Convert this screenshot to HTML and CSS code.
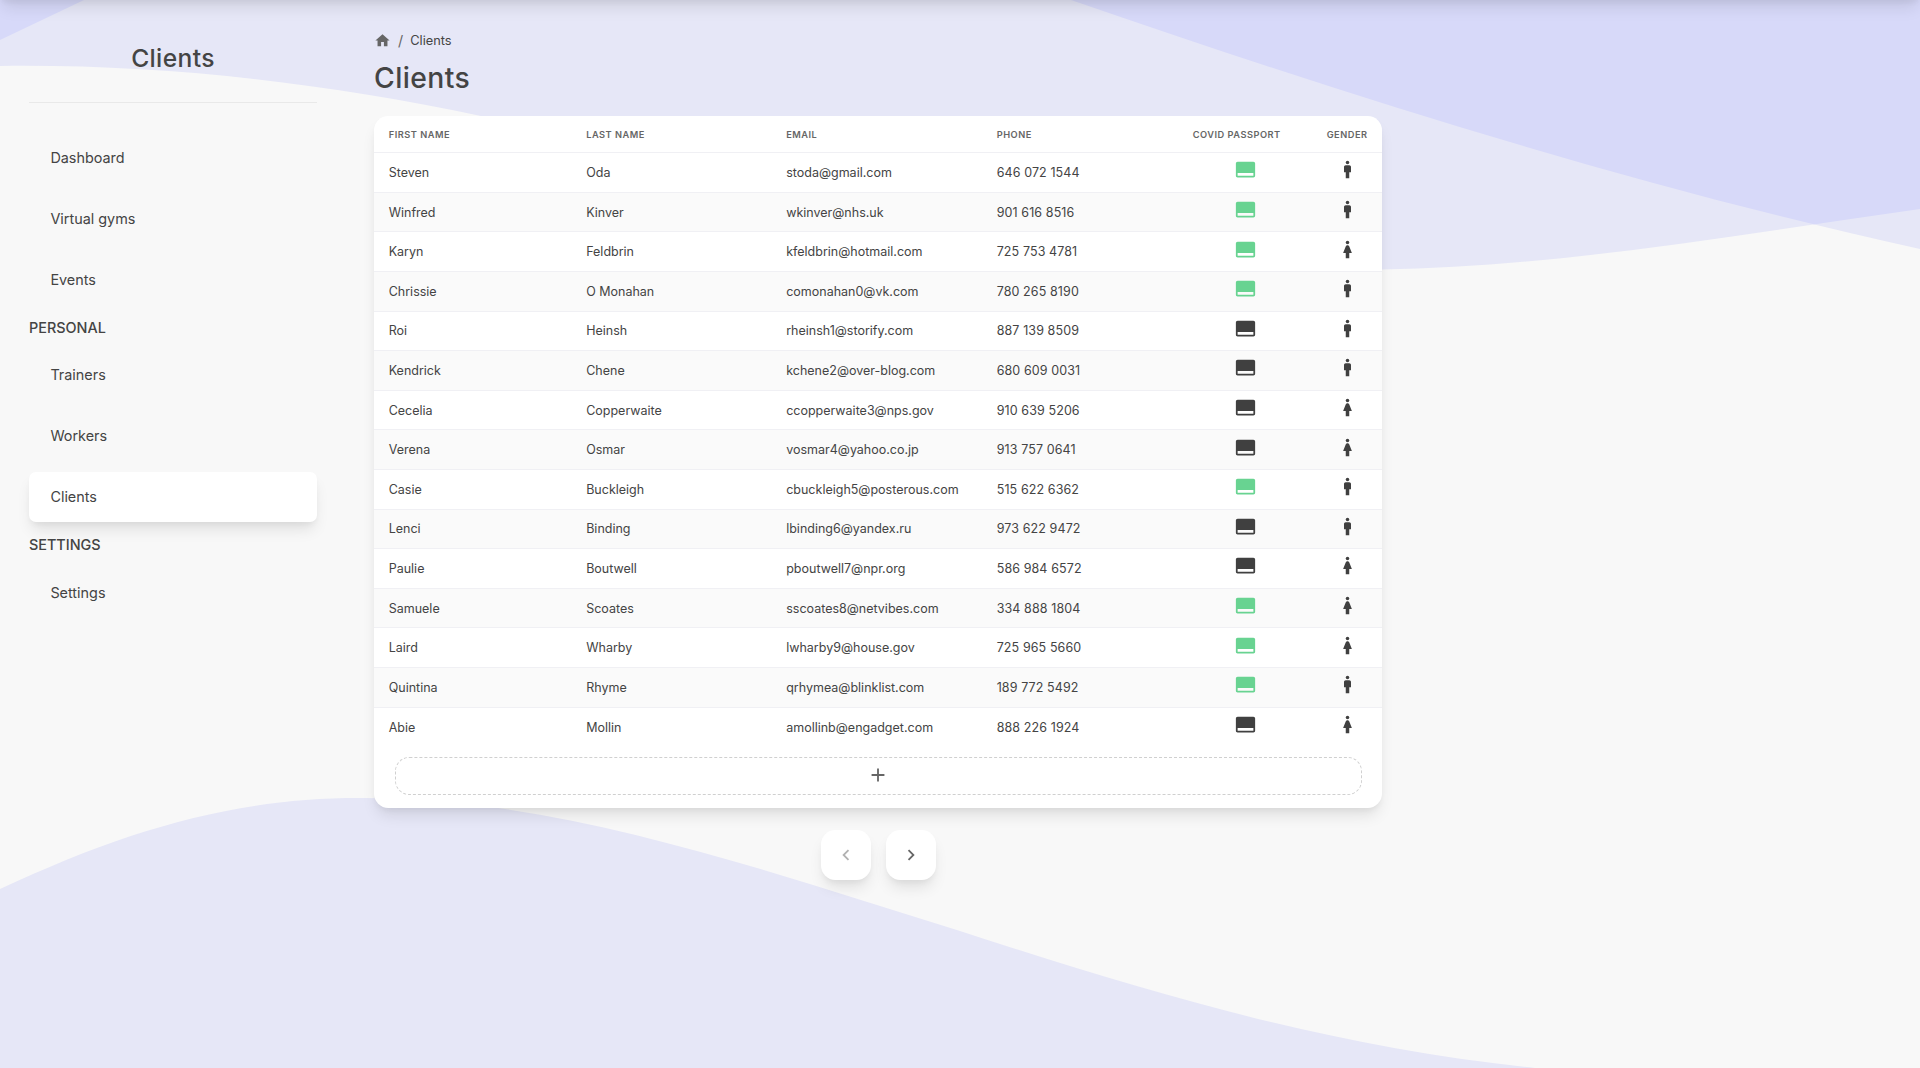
FILE: index.html
```html
<!DOCTYPE html>
<html lang="en">
<head>
<meta charset="utf-8">
<title>Clients</title>
<link rel="stylesheet" href="styles.css">
</head>
<body>
<svg class="waves" viewBox="0 0 1920 1068" preserveAspectRatio="none" aria-hidden="true">
  <path class="light" d="M0,0V66C160,64 320,82 482,116.2C800,185 1150,272 1382,269.5C1560,267 1740,234 1920,209V0Z"/>
  <path class="light" d="M1071,0C1340,93 1630,185 1920,249V0Z"/>
  <path class="light" d="M0,1068V889C130,828 240,797 365,798C560,798 760,869 960,931C1150,993 1330,1047 1535,1068Z"/>
  <clipPath id="front"><path d="M0,0V66C160,64 320,82 482,116.2C800,185 1150,272 1382,269.5C1560,267 1740,234 1920,209V0Z"/></clipPath>
  <path class="deep" clip-path="url(#front)" d="M0,0V40L84,0ZM1071,0C1340,93 1630,185 1920,249V0Z"/>
</svg>
<svg class="sprite" aria-hidden="true">
  <symbol id="home" viewBox="0 0 24 24"><path d="M10 20v-6h4v6h5v-8h3L12 3 2 12h3v8z"/></symbol>
  <symbol id="pass" viewBox="0 0 24 24"><path d="M21 3H3c-1.1 0-2 .9-2 2v14c0 1.1.9 2 2 2h18c1.1 0 2-.9 2-2V5c0-1.1-.9-2-2-2zm0 16H3v-3h18v3z"/></symbol>
  <symbol id="man" viewBox="0 0 24 24"><path d="M14 7h-4c-1.1 0-2 .9-2 2v6h2v7h4v-7h2V9c0-1.1-.9-2-2-2z"/><circle cx="12" cy="4" r="2"/></symbol>
  <symbol id="woman" viewBox="0 0 24 24"><path d="M13.94 8.31C13.62 7.52 12.85 7 12 7s-1.62.52-1.94 1.31L7 16h3v6h4v-6h3l-3.06-7.69z"/><circle cx="12" cy="4" r="2"/></symbol>
  <symbol id="plus" viewBox="0 0 24 24"><path d="M19 13h-6v6h-2v-6H5v-2h6V5h2v6h6v2z"/></symbol>
  <symbol id="prev" viewBox="0 0 24 24"><path d="M15.41 7.41 14 6l-6 6 6 6 1.41-1.41L10.83 12z"/></symbol>
  <symbol id="next" viewBox="0 0 24 24"><path d="M10 6 8.59 7.41 13.17 12l-4.58 4.59L10 18l6-6z"/></symbol>
</svg>
<header class="topbar"></header>
<div class="layout">
  <aside class="sidebar">
    <div class="brand">Clients</div>
    <nav class="nav">
      <div class="group"><a class="item">Dashboard</a><a class="item">Virtual gyms</a><a class="item">Events</a></div>
      <div class="label">PERSONAL</div>
      <div class="group"><a class="item">Trainers</a><a class="item">Workers</a><a class="item active">Clients</a></div>
      <div class="label">SETTINGS</div>
      <div class="group last"><a class="item">Settings</a></div>
    </nav>
  </aside>
  <main class="content">
    <div class="crumbs"><svg class="home"><use href="#home"/></svg><span class="slash">/</span><span>Clients</span></div>
    <h1 class="title">Clients</h1>
    <section class="card">
      <table class="table">
        <colgroup><col class="c1"><col class="c2"><col class="c3"><col class="c4"><col class="c5"><col class="c6"></colgroup>
        <thead><tr><th>FIRST NAME</th><th>LAST NAME</th><th>EMAIL</th><th>PHONE</th><th>COVID PASSPORT</th><th>GENDER</th></tr></thead>
        <tbody>
          <tr><td>Steven</td><td>Oda</td><td>stoda@gmail.com</td><td class="phone">646 072 1544</td><td class="ic ok"><svg><use href="#pass"/></svg></td><td class="ic"><svg><use href="#man"/></svg></td></tr>
          <tr><td>Winfred</td><td>Kinver</td><td>wkinver@nhs.uk</td><td class="phone">901 616 8516</td><td class="ic ok"><svg><use href="#pass"/></svg></td><td class="ic"><svg><use href="#man"/></svg></td></tr>
          <tr><td>Karyn</td><td>Feldbrin</td><td>kfeldbrin@hotmail.com</td><td class="phone">725 753 4781</td><td class="ic ok"><svg><use href="#pass"/></svg></td><td class="ic"><svg><use href="#woman"/></svg></td></tr>
          <tr><td>Chrissie</td><td>O Monahan</td><td>comonahan0@vk.com</td><td class="phone">780 265 8190</td><td class="ic ok"><svg><use href="#pass"/></svg></td><td class="ic"><svg><use href="#man"/></svg></td></tr>
          <tr><td>Roi</td><td>Heinsh</td><td>rheinsh1@storify.com</td><td class="phone">887 139 8509</td><td class="ic"><svg><use href="#pass"/></svg></td><td class="ic"><svg><use href="#man"/></svg></td></tr>
          <tr><td>Kendrick</td><td>Chene</td><td>kchene2@over-blog.com</td><td class="phone">680 609 0031</td><td class="ic"><svg><use href="#pass"/></svg></td><td class="ic"><svg><use href="#man"/></svg></td></tr>
          <tr><td>Cecelia</td><td>Copperwaite</td><td>ccopperwaite3@nps.gov</td><td class="phone">910 639 5206</td><td class="ic"><svg><use href="#pass"/></svg></td><td class="ic"><svg><use href="#woman"/></svg></td></tr>
          <tr><td>Verena</td><td>Osmar</td><td>vosmar4@yahoo.co.jp</td><td class="phone">913 757 0641</td><td class="ic"><svg><use href="#pass"/></svg></td><td class="ic"><svg><use href="#woman"/></svg></td></tr>
          <tr><td>Casie</td><td>Buckleigh</td><td>cbuckleigh5@posterous.com</td><td class="phone">515 622 6362</td><td class="ic ok"><svg><use href="#pass"/></svg></td><td class="ic"><svg><use href="#man"/></svg></td></tr>
          <tr><td>Lenci</td><td>Binding</td><td>lbinding6@yandex.ru</td><td class="phone">973 622 9472</td><td class="ic"><svg><use href="#pass"/></svg></td><td class="ic"><svg><use href="#man"/></svg></td></tr>
          <tr><td>Paulie</td><td>Boutwell</td><td>pboutwell7@npr.org</td><td class="phone">586 984 6572</td><td class="ic"><svg><use href="#pass"/></svg></td><td class="ic"><svg><use href="#woman"/></svg></td></tr>
          <tr><td>Samuele</td><td>Scoates</td><td>sscoates8@netvibes.com</td><td class="phone">334 888 1804</td><td class="ic ok"><svg><use href="#pass"/></svg></td><td class="ic"><svg><use href="#woman"/></svg></td></tr>
          <tr><td>Laird</td><td>Wharby</td><td>lwharby9@house.gov</td><td class="phone">725 965 5660</td><td class="ic ok"><svg><use href="#pass"/></svg></td><td class="ic"><svg><use href="#woman"/></svg></td></tr>
          <tr><td>Quintina</td><td>Rhyme</td><td>qrhymea@blinklist.com</td><td class="phone">189 772 5492</td><td class="ic ok"><svg><use href="#pass"/></svg></td><td class="ic"><svg><use href="#man"/></svg></td></tr>
          <tr><td>Abie</td><td>Mollin</td><td>amollinb@engadget.com</td><td class="phone">888 226 1924</td><td class="ic"><svg><use href="#pass"/></svg></td><td class="ic"><svg><use href="#woman"/></svg></td></tr>
        </tbody>
      </table>
      <button class="add" aria-label="Add client"><svg><use href="#plus"/></svg></button>
    </section>
    <div class="pager">
      <button class="page" disabled aria-label="Previous page"><svg><use href="#prev"/></svg></button>
      <button class="page" aria-label="Next page"><svg><use href="#next"/></svg></button>
    </div>
  </main>
</div>
</body>
</html>
```
FILE: styles.css
```css
:root {
  --text: #444;
  --shadow: 0 10px 15px -3px rgba(0, 0, 0, .1), 0 4px 6px -2px rgba(0, 0, 0, .05);
}
* { box-sizing: border-box; }
body {
  margin: 0;
  height: 1068px;
  overflow: hidden;
  background: #f8f8f8;
  color: var(--text);
  font-family: Inter, sans-serif;
  font-size: 14.4px;
}
svg { display: block; fill: currentColor; }
button { border: 0; padding: 0; background: #fff; color: inherit; }

/* decorative page background */
.waves { position: absolute; inset: 0; width: 1920px; height: 1068px; z-index: -1; }
.light { fill: #e6e7f7; }
.deep { fill: #d7d9f9; }
.sprite { position: absolute; width: 0; height: 0; }
.topbar { position: absolute; top: -60px; left: 0; right: 0; height: 60px; box-shadow: var(--shadow); }

.layout { display: flex; }
.sidebar { width: 346px; padding: 0 29px; flex: none; }
.brand {
  height: 103px;
  padding-top: 43px;
  border-bottom: 1px solid #e9e9e9;
  text-align: center;
  font-size: 24.6px;
  line-height: 30px;
  font-weight: 480;
  letter-spacing: .38px;
}
.nav { padding-top: 30px; }
.group { display: flex; flex-direction: column; gap: 11px; }
.item { height: 50px; padding: 0 21.4px 2px; display: flex; align-items: center; border-radius: 7px; }
.last .item { padding-bottom: 0; }
.active { background: #fff; box-shadow: var(--shadow); }
.label { height: 45px; line-height: 45px; font-weight: 480; }

.content { width: 1036px; padding: 30px 0 0 28px; }
.crumbs { height: 21px; display: flex; align-items: center; font-size: 12.8px; }
.home { width: 17px; height: 17px; margin-right: -1px; color: #666; }
.slash { margin: 0 7px 0 8px; font-size: 14.4px; color: #666; }
.title { margin: 0; height: 65px; padding-top: 9px; font-size: 28.3px; line-height: 36px; font-weight: 480; letter-spacing: .42px; }

.card { height: 692px; background: #fff; border-radius: 14.4px; box-shadow: var(--shadow); }
.table { width: 1008px; table-layout: fixed; border-collapse: separate; border-spacing: 0; }
.c1 { width: 197.5px; }
.c2 { width: 200px; }
.c3 { width: 210.5px; }
.c4 { width: 196px; }
.c5 { width: 134px; }
.c6 { width: 70px; }
th {
  height: 37.2px;
  padding: 0 0 0 14.7px;
  border-bottom: 1px solid #f0f0f4;
  text-align: left;
  white-space: nowrap;
  font-size: 9.25px;
  font-weight: 600;
  letter-spacing: .5px;
  color: #666;
}
td { height: 39.6px; padding: 0 0 0 14.7px; border-bottom: 1px solid #f0f0f4; font-size: 12.5px; }
.phone { letter-spacing: .1px; }
tbody tr:nth-child(even) { background: #fafafa; }
tbody tr:last-child td { border-bottom: 0; }
.ic { padding: 0 0 5px; color: #404040; }
.ic svg { width: 21px; height: 21px; margin: 0 auto; }
.ok { color: #68d391; }
.add {
  display: flex;
  align-items: center;
  justify-content: center;
  width: 967px;
  height: 38px;
  margin: 9.8px auto 0;
  border: 1px dashed #d0d0d0;
  border-radius: 14.4px;
}
.add svg, .page svg { width: 22px; height: 22px; color: #666; }
.add svg { margin-bottom: 1px; }
.pager { margin-top: 22px; display: flex; justify-content: center; gap: 15px; }
.page { width: 50px; height: 50px; padding-bottom: 1px; display: flex; align-items: center; justify-content: center; border-radius: 14.4px; box-shadow: var(--shadow); }
.page:disabled svg { opacity: .5; }
```
